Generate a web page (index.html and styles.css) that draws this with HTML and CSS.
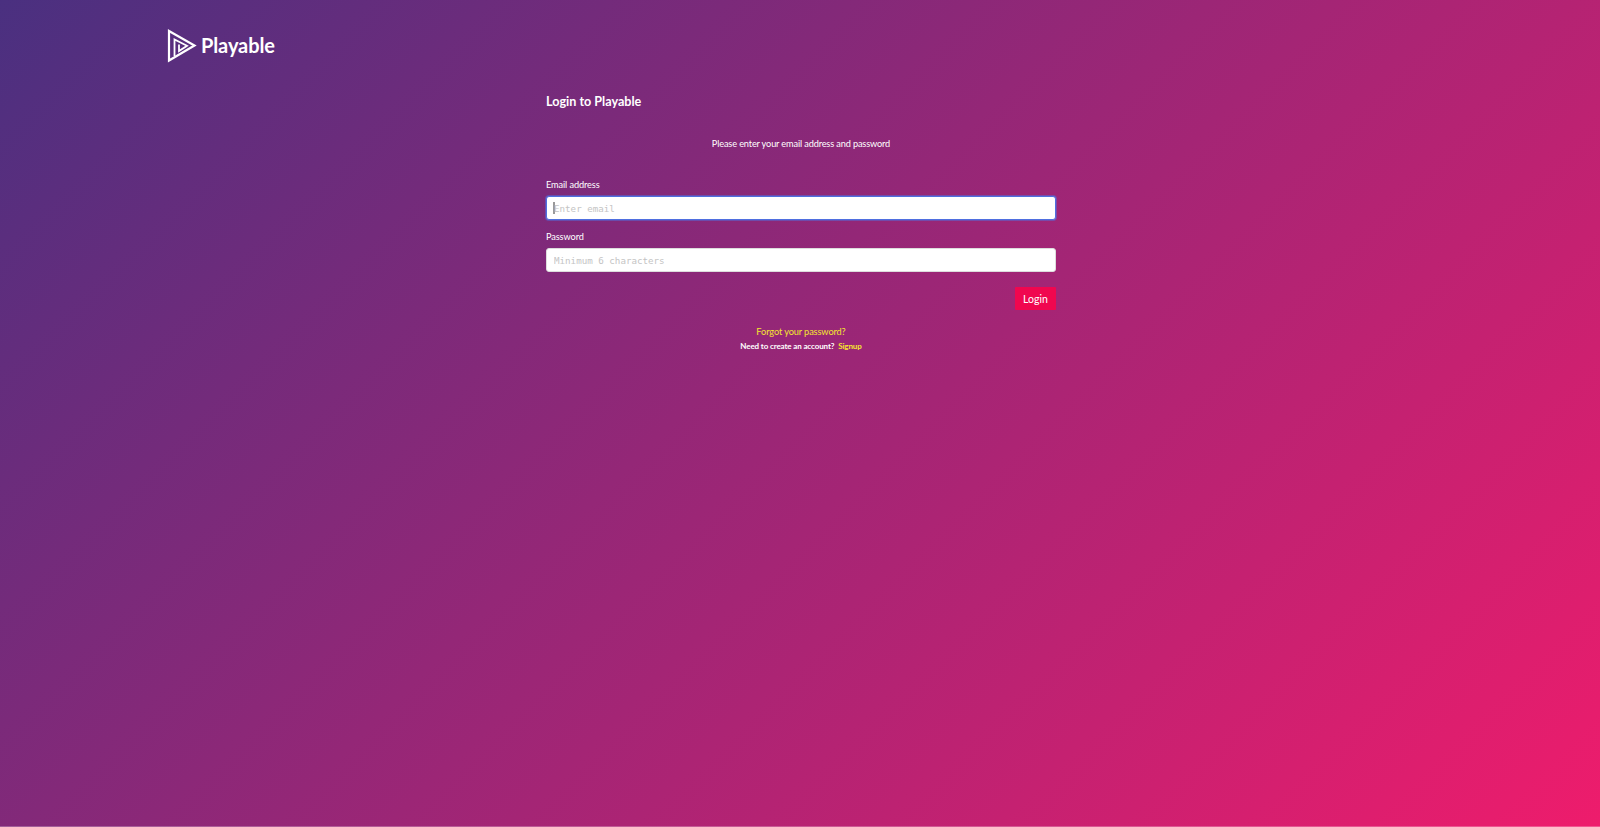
FILE: index.html
```html
<!DOCTYPE html>
<html lang="en">
<head>
    <meta charset="UTF-8">
    <meta name="viewport" content="width=device-width, initial-scale=1.0">
    <title>Login to Playable</title>
    <link rel="stylesheet" href="styles.css">
</head>
<body>

    <header class="topbar">
        <a class="logo" href="#">
            <svg class="logo-mark" width="30" height="34" viewBox="0 0 30 34" fill="none" stroke="#fff" stroke-width="2.2">
                <path d="M2 2 L27.5 16.5 L2 31.5 Z"/>
                <path stroke-width="1.8" d="M7.5 27 V10.5 L20 16.8 L12 22 V15.5"/>
            </svg>
            <span class="logo-text">Playable</span>
        </a>
    </header>

    <!-- Login form -->
    <main class="login">
        <h1 class="login-title">Login to Playable</h1>
        <p class="login-intro">Please enter your email address and password</p>

        <form class="login-form">
            <label class="field-label" for="email">Email address</label>
            <input class="field-input is-focused" type="text" id="email" placeholder="Enter email">

            <label class="field-label" for="password">Password</label>
            <input class="field-input" type="password" id="password" placeholder="Minimum 6 characters">

            <div class="form-actions">
                <button class="login-btn" type="button">Login</button>
            </div>
        </form>

        <p class="login-links"><a href="#">Forgot your password?</a></p>
        <p class="login-links small">Need to create an account? <a href="#">Signup</a></p>
    </main>

</body>
</html>
```

FILE: styles.css
```css
* {
    box-sizing: border-box;
}

html, body {
    height: 100%;
}

body {
    margin: 0;
    font-family: "Lato", "Liberation Sans", sans-serif;
    color: #fff;
    background: linear-gradient(135deg, #4a3080 0%, #ee1c6c 100%);
    border-bottom: 1px solid rgba(255, 255, 255, 0.25);
    overflow: hidden;
}

.topbar {
    padding: 29px 0 0 167px;
    height: 93px;
}

.logo {
    display: inline-flex;
    align-items: center;
    gap: 4px;
    color: #fff;
    text-decoration: none;
}

.logo-text {
    margin-bottom: 2px;
    font-size: 20px;
    font-weight: 700;
    letter-spacing: -0.1px;
}

.login {
    width: 510px;
    margin: 0 auto;
    transform: translateX(1px);
}

.login-title {
    margin: 0;
    font-size: 12.6px;
    font-weight: 700;
    line-height: 18px;
}

.login-intro {
    margin: 25px 0 0;
    font-size: 9.2px;
    letter-spacing: -0.14px;
    line-height: 16px;
    text-align: center;
}

.login-form {
    margin-top: 26px;
}

.field-label {
    display: block;
    font-size: 9.2px;
    letter-spacing: -0.1px;
    line-height: 14px;
    margin-bottom: 4px;
}

.field-input {
    display: block;
    width: 100%;
    height: 24px;
    margin-bottom: 10px;
    padding: 0 7px;
    border: 1px solid #ddd;
    border-radius: 3px;
    background: #fff;
    font-family: "DejaVu Sans Mono", monospace;
    font-size: 9.2px;
    outline: none;
}

.field-input::placeholder {
    color: #c4c4c4;
}

/* focus ring and caret as in the focused state */
.field-input.is-focused {
    border: 1px solid #4f6fe0;
    box-shadow: 0 0 0 1px rgba(79, 111, 224, 0.5);
    background-image: linear-gradient(#999, #999);
    background-repeat: no-repeat;
    background-size: 2px 12px;
    background-position: 6px center;
}

.form-actions {
    display: flex;
    justify-content: flex-end;
    margin-top: 15px;
}

.login-btn {
    width: 41px;
    height: 23px;
    padding: 0;
    border: none;
    border-radius: 1px;
    background-color: #f0074f;
    color: #fff;
    font-family: inherit;
    font-size: 10.5px;
}

.login-links {
    margin: 15px 0 0;
    font-size: 9.2px;
    letter-spacing: -0.1px;
    line-height: 14px;
    text-align: center;
}

.login-links.small {
    margin-top: 0;
    font-size: 8px;
    letter-spacing: -0.12px;
    font-weight: 700;
}

.login-links a {
    color: #f5e62e;
    text-decoration: none;
}

.login-links.small a {
    margin-left: 2px;
}
```
